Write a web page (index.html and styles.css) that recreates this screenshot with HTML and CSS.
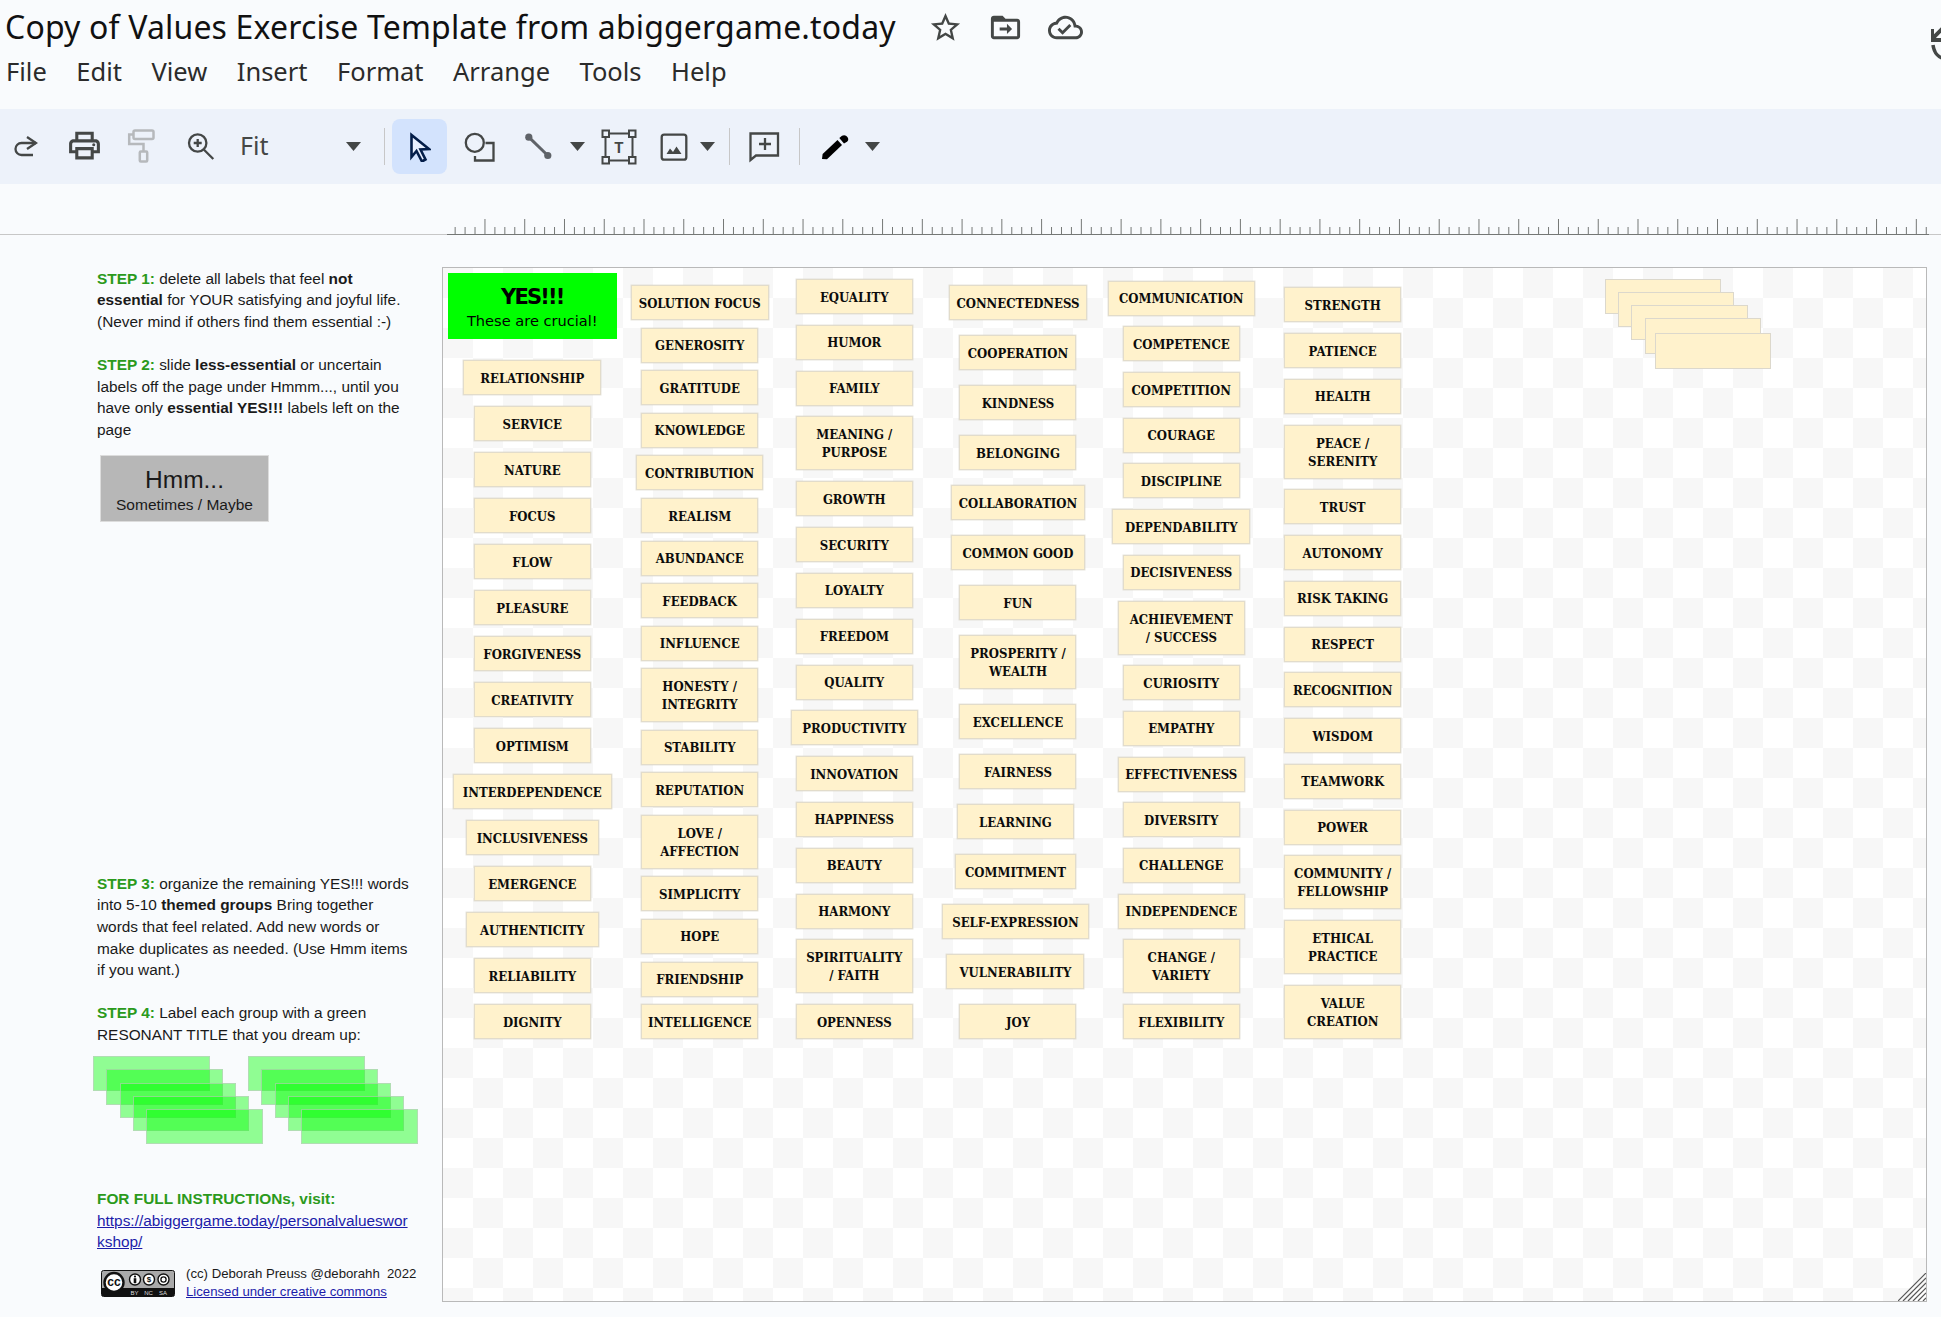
FILE: index.html
```html
<!DOCTYPE html>
<html lang="en">
<head>
  <meta charset="UTF-8">
  <title>Copy of Values Exercise Template from abiggergame.today</title>
  <link rel="stylesheet" href="styles.css">
</head>
<body>

  <header class="doc-header">
    <div class="title-row">
      <h1 class="doc-title">Copy of Values Exercise Template from abiggergame.today</h1>
      <svg class="icon-star" width="35" height="35" viewBox="0 0 24 24"><path d="M22 9.24l-7.19-.62L12 2 9.19 8.63 2 9.24l5.46 4.73L5.82 21 12 17.27 18.18 21l-1.63-7.03L22 9.24zM12 15.4l-3.76 2.27 1-4.28-3.32-2.88 4.38-.38L12 6.1l1.71 4.04 4.38.38-3.32 2.88 1 4.28L12 15.4z"/></svg>
      <svg class="icon-folder" width="35" height="35" viewBox="0 0 24 24"><path d="M20 6h-8l-2-2H4c-1.1 0-2 .9-2 2v12c0 1.1.9 2 2 2h16c1.1 0 2-.9 2-2V8c0-1.1-.9-2-2-2zm0 12H4V8h16v10z"/><path d="M13 9.5v2.5H8v2h5v2.5l3.5-3.5z"/></svg>
      <svg class="icon-cloud" width="35" height="35" viewBox="0 0 24 24"><path d="M19.35 10.04C18.67 6.59 15.64 4 12 4 9.11 4 6.6 5.64 5.35 8.04 2.34 8.36 0 10.91 0 14c0 3.31 2.69 6 6 6h13c2.76 0 5-2.24 5-5 0-2.64-2.05-4.78-4.65-4.96zM19 18H6c-2.21 0-4-1.79-4-4 0-2.05 1.53-3.76 3.56-3.97l1.07-.11.5-.95C8.08 7.14 9.94 6 12 6c2.62 0 4.88 1.86 5.39 4.43l.3 1.5 1.53.11c1.56.1 2.78 1.41 2.78 2.96 0 1.65-1.35 3-3 3z"/><path d="M10 14.17 7.91 12.09 6.5 13.5 10 17l6.01-6.01-1.41-1.41z"/></svg>
      <svg class="icon-history" width="10" height="34" viewBox="0 0 10 34"><path d="M1 2V13H12" fill="none" stroke="#444746" stroke-width="4"/><path d="M1 12 12 1" fill="none" stroke="#444746" stroke-width="4"/><path d="M2 18C3 26 8 31 14 32" fill="none" stroke="#444746" stroke-width="3.5"/></svg>
    </div>
    <nav class="menu">
      <span>File</span>
      <span>Edit</span>
      <span>View</span>
      <span>Insert</span>
      <span>Format</span>
      <span>Arrange</span>
      <span>Tools</span>
      <span>Help</span>
    </nav>
  </header>

  <div class="toolbar">
    <svg class="t-redo" width="24" height="24" viewBox="0 0 24 24"><path class="line" d="M19 21H7.5a6 6 0 0 1 0-12H22"/><path class="line" d="M13 3l9 6-9 6"/></svg>
    <svg class="t-print" width="37" height="37" viewBox="0 0 24 24"><path d="M19 8h-1V3H6v5H5c-1.66 0-3 1.34-3 3v6h4v4h12v-4h4v-6c0-1.66-1.34-3-3-3zM8 5h8v3H8V5zm8 12v2H8v-4h8v2zm2-2v-2H6v2H4v-4c0-.55.45-1 1-1h14c.55 0 1 .45 1 1v4h-2z"/><circle cx="18" cy="11.5" r="1"/></svg>
    <svg class="t-paint" width="28" height="34" viewBox="0 0 28 34"><rect class="faded" x="6.5" y="1.5" width="20" height="8.5" rx="1.5"/><path class="faded" d="M6 5.5H2.2V15H16.5V22"/><rect class="faded" x="12.8" y="22.5" width="7.4" height="10" rx="1"/></svg>
    <svg class="t-zoom" width="28" height="28" viewBox="0 0 28 28"><circle class="line" cx="10.7" cy="11" r="8.7"/><path class="line" d="M17 17.7 26.3 27M10.7 7v8M6.7 11h8"/></svg>
    <div class="zoom-select">
      <span class="zoom-value">Fit</span>
      <svg class="caret" width="15" height="9" viewBox="0 0 15 9"><path d="M0 0h15L7.5 9z"/></svg>
    </div>
    <span class="sep t-sep1"></span>
    <div class="tool-active">
      <svg class="t-cursor" width="24" height="32" viewBox="0 0 24 32"><path d="M4.5 5V27L9.5 21 15 31.5 18.5 29.5 13.5 19.5 22 19Z" fill="#e9f0fe" stroke="#041e49" stroke-width="2.6" stroke-linejoin="miter"/></svg>
    </div>
    <svg class="t-shape" width="32" height="32" viewBox="0 0 32 32"><circle class="line" cx="10.8" cy="11.8" r="9"/><path class="line" d="M21.5 12H29.5V29.5H11V25"/></svg>
    <svg class="t-line" width="28" height="28" viewBox="0 0 28 28"><path d="M4.8 5.2 23.8 23.5" fill="none" stroke="#5f6368" stroke-width="3"/><circle cx="4.8" cy="5.2" r="3.6" fill="#5f6368"/><circle cx="23.8" cy="23.5" r="3.6" fill="#5f6368"/></svg>
    <svg class="caret t-caret-line" width="15" height="9" viewBox="0 0 15 9"><path d="M0 0h15L7.5 9z"/></svg>
    <svg class="t-textbox" width="36" height="36" viewBox="0 0 36 36"><path class="thin" d="M8 4.5H27M8 31.5H27M4.5 8V27M31.5 8V27"/><rect class="thin" x="1.5" y="1.5" width="6.5" height="6.5"/><rect class="thin" x="28" y="1.5" width="6.5" height="6.5"/><rect class="thin" x="1.5" y="28" width="6.5" height="6.5"/><rect class="thin" x="28" y="28" width="6.5" height="6.5"/><text x="18" y="24" text-anchor="middle" class="t-letter">T</text></svg>
    <svg class="t-image" width="28" height="28" viewBox="0 0 28 28"><rect class="line" x="1.7" y="1.7" width="24.6" height="25" rx="2.5"/><path d="M6.5 21 10 15.5 13 19 16.5 13.5 21.5 21Z"/></svg>
    <svg class="caret t-caret-image" width="15" height="9" viewBox="0 0 15 9"><path d="M0 0h15L7.5 9z"/></svg>
    <span class="sep t-sep2"></span>
    <svg class="t-comment" width="32" height="32" viewBox="0 0 32 32"><path class="line" d="M2.5 2.5H30V24.5H8L2.5 29Z"/><path class="line" d="M17 7V19M11 13H23"/></svg>
    <span class="sep t-sep3"></span>
    <svg class="t-pen" width="28" height="28" viewBox="0 0 28 28"><path d="M1 26 1.6 21 16.5 7 21 12 6 26.3Z" fill="#000"/><path d="M18.3 5 21 2.8C23 1.4 26 2.4 27 5 27.6 6.6 27 8 26 8.8L23 10.6Z" fill="#000"/></svg>
    <svg class="caret t-caret-pen" width="15" height="9" viewBox="0 0 15 9"><path d="M0 0h15L7.5 9z"/></svg>
  </div>

  <div class="ruler-row">
    <svg class="ruler" width="1482" height="16">
      <defs>
        <pattern id="ticks" width="39.76" height="16" patternUnits="userSpaceOnUse" x="-2.3">
          <rect x="0" y="0" width="1" height="16"/>
          <rect x="10" y="8" width="1" height="8"/>
          <rect x="20" y="8" width="1" height="8"/>
          <rect x="30" y="8" width="1" height="8"/>
        </pattern>
      </defs>
      <rect width="1482" height="16" fill="url(#ticks)"/>
      <rect y="15" width="1482" height="1"/>
    </svg>
  </div>

  <main class="workspace">
    <aside class="sidebar">
      <p class="note"><b class="step">STEP 1:</b> delete all labels that feel <b>not<br>essential</b> for YOUR satisfying and joyful life.<br>(Never mind if others find them essential :-)</p>
      <p class="note note-gap"><b class="step">STEP 2:</b> slide <b>less-essential</b> or uncertain<br>labels off the page under Hmmm..., until you<br>have only <b>essential YES!!!</b> labels left on the<br>page</p>
      <div class="hmm">
        <span class="hmm-title">Hmm...</span>
        <span class="hmm-sub">Sometimes / Maybe</span>
      </div>
      <p class="note note-step3"><b class="step">STEP 3:</b> organize the remaining YES!!! words<br>into 5-10 <b>themed groups</b> Bring together<br>words that feel related. Add new words or<br>make duplicates as needed. (Use Hmm items<br>if you want.)</p>
      <p class="note note-gap"><b class="step">STEP 4:</b> Label each group with a green<br>RESONANT TITLE that you dream up:</p>
      <div class="green-stacks">
        <div class="green-stack">
          <i class="sheet s1"></i><i class="sheet s2"></i><i class="sheet s3"></i><i class="sheet s4"></i><i class="sheet s5"></i>
        </div>
        <div class="green-stack">
          <i class="sheet s1"></i><i class="sheet s2"></i><i class="sheet s3"></i><i class="sheet s4"></i><i class="sheet s5"></i>
        </div>
      </div>
      <p class="note note-full"><b class="step">FOR FULL INSTRUCTIONs, visit:</b><br><a href="#">https://abiggergame.today/personalvalueswor<br>kshop/</a></p>
      <div class="license">
        <svg class="cc-badge" width="74" height="27" viewBox="0 0 74 27">
          <rect x=".5" y=".5" width="73" height="26" rx="2" fill="#a9a9a9" stroke="#111"/>
          <rect x="1" y="18" width="72" height="8" fill="#111"/>
          <circle cx="13" cy="12.5" r="9.5" fill="#fff" stroke="#111" stroke-width="2.4"/>
          <text x="13" y="16" text-anchor="middle" class="cc-big">cc</text>
          <circle cx="34" cy="9.5" r="5.5" fill="#fff" stroke="#111" stroke-width="1.4"/>
          <circle cx="34" cy="6.6" r="1.1" fill="#111"/>
          <rect x="32.7" y="8.2" width="2.6" height="5" fill="#111"/>
          <circle cx="48" cy="9.5" r="5.5" fill="#fff" stroke="#111" stroke-width="1.4"/>
          <text x="48" y="12.4" text-anchor="middle" class="cc-small">$</text>
          <circle cx="62.5" cy="9.5" r="5.5" fill="#fff" stroke="#111" stroke-width="1.4"/>
          <circle cx="62.5" cy="9.5" r="2.6" fill="none" stroke="#111" stroke-width="1.3"/>
          <text x="33.5" y="24.6" text-anchor="middle" class="cc-tag">BY</text>
          <text x="47.5" y="24.6" text-anchor="middle" class="cc-tag">NC</text>
          <text x="62" y="24.6" text-anchor="middle" class="cc-tag">SA</text>
        </svg>
        <div class="license-text">
          <div>(cc) Deborah Preuss @deborahh&nbsp; 2022</div>
          <a href="#">Licensed under creative commons</a>
        </div>
      </div>
    </aside>

    <section class="slide">
      <div class="col col-1">
        <div class="yes-card">
          <span class="yes-title">YES!!!</span>
          <span class="yes-sub">These are crucial!</span>
        </div>
        <div class="label w138">RELATIONSHIP</div>
        <div class="label">SERVICE</div>
        <div class="label">NATURE</div>
        <div class="label">FOCUS</div>
        <div class="label">FLOW</div>
        <div class="label">PLEASURE</div>
        <div class="label">FORGIVENESS</div>
        <div class="label">CREATIVITY</div>
        <div class="label">OPTIMISM</div>
        <div class="label w159">INTERDEPENDENCE</div>
        <div class="label w133">INCLUSIVENESS</div>
        <div class="label">EMERGENCE</div>
        <div class="label w133">AUTHENTICITY</div>
        <div class="label">RELIABILITY</div>
        <div class="label">DIGNITY</div>
      </div>

      <div class="col col-2">
        <div class="label w138">SOLUTION FOCUS</div>
        <div class="label">GENEROSITY</div>
        <div class="label">GRATITUDE</div>
        <div class="label">KNOWLEDGE</div>
        <div class="label w127">CONTRIBUTION</div>
        <div class="label">REALISM</div>
        <div class="label">ABUNDANCE</div>
        <div class="label">FEEDBACK</div>
        <div class="label">INFLUENCE</div>
        <div class="label two">HONESTY /<br>INTEGRITY</div>
        <div class="label">STABILITY</div>
        <div class="label">REPUTATION</div>
        <div class="label two">LOVE /<br>AFFECTION</div>
        <div class="label">SIMPLICITY</div>
        <div class="label">HOPE</div>
        <div class="label">FRIENDSHIP</div>
        <div class="label">INTELLIGENCE</div>
      </div>

      <div class="col col-3">
        <div class="label">EQUALITY</div>
        <div class="label">HUMOR</div>
        <div class="label">FAMILY</div>
        <div class="label two">MEANING /<br>PURPOSE</div>
        <div class="label">GROWTH</div>
        <div class="label">SECURITY</div>
        <div class="label">LOYALTY</div>
        <div class="label">FREEDOM</div>
        <div class="label">QUALITY</div>
        <div class="label w127">PRODUCTIVITY</div>
        <div class="label">INNOVATION</div>
        <div class="label">HAPPINESS</div>
        <div class="label">BEAUTY</div>
        <div class="label">HARMONY</div>
        <div class="label two">SPIRITUALITY<br>/ FAITH</div>
        <div class="label">OPENNESS</div>
      </div>

      <div class="col col-4">
        <div class="label w138">CONNECTEDNESS</div>
        <div class="label">COOPERATION</div>
        <div class="label">KINDNESS</div>
        <div class="label">BELONGING</div>
        <div class="label w133">COLLABORATION</div>
        <div class="label w133">COMMON GOOD</div>
        <div class="label">FUN</div>
        <div class="label two">PROSPERITY /<br>WEALTH</div>
        <div class="label">EXCELLENCE</div>
        <div class="label">FAIRNESS</div>
        <div class="label nudged">LEARNING</div>
        <div class="label nudged w121">COMMITMENT</div>
        <div class="label nudged w147">SELF-EXPRESSION</div>
        <div class="label nudged w138">VULNERABILITY</div>
        <div class="label">JOY</div>
      </div>

      <div class="col col-5">
        <div class="label w147">COMMUNICATION</div>
        <div class="label">COMPETENCE</div>
        <div class="label">COMPETITION</div>
        <div class="label">COURAGE</div>
        <div class="label">DISCIPLINE</div>
        <div class="label w138">DEPENDABILITY</div>
        <div class="label">DECISIVENESS</div>
        <div class="label two w127">ACHIEVEMENT<br>/ SUCCESS</div>
        <div class="label">CURIOSITY</div>
        <div class="label">EMPATHY</div>
        <div class="label w127">EFFECTIVENESS</div>
        <div class="label">DIVERSITY</div>
        <div class="label">CHALLENGE</div>
        <div class="label w127">INDEPENDENCE</div>
        <div class="label two">CHANGE /<br>VARIETY</div>
        <div class="label">FLEXIBILITY</div>
      </div>

      <div class="col col-6">
        <div class="label">STRENGTH</div>
        <div class="label">PATIENCE</div>
        <div class="label">HEALTH</div>
        <div class="label two">PEACE /<br>SERENITY</div>
        <div class="label">TRUST</div>
        <div class="label">AUTONOMY</div>
        <div class="label">RISK TAKING</div>
        <div class="label">RESPECT</div>
        <div class="label">RECOGNITION</div>
        <div class="label">WISDOM</div>
        <div class="label">TEAMWORK</div>
        <div class="label">POWER</div>
        <div class="label two">COMMUNITY /<br>FELLOWSHIP</div>
        <div class="label two">ETHICAL<br>PRACTICE</div>
        <div class="label two">VALUE<br>CREATION</div>
      </div>

      <div class="blank-stack">
        <i class="blank b1"></i><i class="blank b2"></i><i class="blank b3"></i><i class="blank b4"></i><i class="blank b5"></i>
      </div>

      <svg class="resize-grip" width="28" height="28" viewBox="0 0 28 28">
        <path d="M0 28 28 0M5 28 28 5M10 28 28 10M15 28 28 15M20 28 28 20M25 28 28 25" fill="none" stroke="#555" stroke-width="1.2"/>
      </svg>
    </section>
  </main>

</body>
</html>
```

FILE: styles.css
```css
* {
  box-sizing: border-box;
}

html, body {
  margin: 0;
  height: 1317px;
  overflow: hidden;
}

body {
  background-color: #f9fbfd;
  font-family: 'Liberation Sans', Arial, sans-serif;
  color: #111;
}

/* header */

.doc-header {
  height: 109px;
}

.title-row {
  display: flex;
  align-items: center;
  height: 53px;
  padding-left: 5px;
}

.title-row svg {
  flex: none;
  fill: #444746;
  margin-top: 1px;
}

.doc-title {
  margin: 0;
  width: 923px;
  font-family: 'Noto Sans', sans-serif;
  font-size: 32px;
  font-weight: 400;
  letter-spacing: .16px;
  color: #111;
  white-space: nowrap;
}

.icon-folder {
  margin-left: 25px;
}

.icon-cloud {
  margin-left: 25px;
}

.title-row .icon-history {
  margin-left: auto;
  margin-top: 35px;
}

.menu {
  display: flex;
  gap: 29.5px;
  padding-left: 6px;
  font-family: 'Noto Sans', sans-serif;
  font-size: 25.5px;
  line-height: 36px;
  color: #2b2b2b;
}

/* toolbar */

.toolbar {
  display: flex;
  align-items: center;
  height: 75px;
  background-color: #edf2fa;
}

.toolbar svg {
  flex: none;
  fill: #444746;
}

.line {
  fill: none;
  stroke: #444746;
  stroke-width: 2.3;
}

.thin {
  fill: none;
  stroke: #444746;
  stroke-width: 2;
}

.faded {
  fill: none;
  stroke: #b6b9bc;
  stroke-width: 2.5;
}

.t-letter {
  font-family: Roboto, sans-serif;
  font-size: 15px;
  font-weight: 700;
}

.t-redo { margin-left: 14px; margin-top: -2px; }
.t-print { margin-left: 28px; margin-top: -2px; }
.t-paint { margin-left: 24px; margin-top: -2px; }
.t-zoom { margin-left: 32px; margin-top: -2px; }
.t-cursor { margin-top: -2px; margin-left: -2px; }
.t-shape { margin-left: 16.5px; }
.t-line { margin-left: 28px; margin-top: -2px; }
.t-caret-line { margin-left: 18.5px; }
.t-textbox { margin-left: 15.5px; margin-top: 1px; }
.t-image { margin-left: 23px; margin-top: 1px; }
.t-caret-image { margin-left: 12px; }
.t-sep1 { margin-left: 23px; }
.t-sep2 { margin-left: 14px; }
.t-sep3 { margin-left: 19px; }
.t-comment { margin-left: 18px; margin-top: 1px; }
.t-pen { margin-left: 21.5px; margin-top: 1px; }
.t-caret-pen { margin-left: 15.5px; }

.zoom-select {
  display: flex;
  align-items: center;
  justify-content: space-between;
  width: 121px;
  margin-left: 25px;
  font-family: 'Noto Sans', sans-serif;
  font-size: 25px;
  color: #444746;
}

.zoom-value {
  margin-top: -4px;
}

.sep {
  flex: none;
  width: 1px;
  height: 37px;
  background-color: #c7c7c7;
}

.tool-active {
  display: flex;
  align-items: center;
  justify-content: center;
  width: 55px;
  height: 55px;
  margin-left: 7px;
  border-radius: 8px;
  background-color: #d3e3fd;
}

/* ruler */

.ruler-row {
  display: flex;
  align-items: flex-end;
  height: 51px;
  padding-left: 447px;
  border-bottom: 1px solid #c7c7c7;
}

.ruler {
  display: block;
  fill: #747775;
  margin-bottom: -1px;
  shape-rendering: crispEdges;
}

/* left notes */

.workspace {
  display: flex;
  align-items: flex-start;
  padding-top: 32px;
}

.sidebar {
  flex: none;
  width: 442px;
  padding-left: 97px;
  padding-top: .8px;
  font-size: 15.4px;
  line-height: 21.6px;
  color: #1a1a1a;
}

.note {
  margin: 0;
  white-space: nowrap;
}

.note-gap {
  margin-top: 21.6px;
}

.note-step3 {
  margin-top: 350.5px;
}

.note-full {
  margin-top: 43.5px;
}

.step {
  color: #2b9a1c;
}

.note a,
.license a {
  color: #1c1caa;
}

.hmm {
  display: flex;
  flex-direction: column;
  align-items: center;
  width: 169px;
  height: 67px;
  margin: 14.7px 0 0 3px;
  padding-top: 9px;
  border: 1px solid #dcdcdc;
  background-color: #b7b7b7;
}

.hmm-title {
  font-size: 24.5px;
  line-height: 30px;
}

.hmm-sub {
  font-size: 15.5px;
  line-height: 19px;
}

.green-stacks {
  display: flex;
  gap: 38.7px;
  margin: 10.7px 0 0 -3.7px;
}

.green-stack {
  position: relative;
  width: 116.3px;
  height: 88.3px;
}

.sheet {
  position: absolute;
  width: 116.3px;
  height: 35.3px;
  border: 1px solid rgba(200, 200, 200, 0.6);
  background-color: rgba(0, 255, 0, 0.42);
}

.s1 { left: 0; top: 0; }
.s2 { left: 13px; top: 13.3px; }
.s3 { left: 26.4px; top: 26.6px; }
.s4 { left: 39.7px; top: 39.6px; }
.s5 { left: 53px; top: 53px; }

.license {
  display: flex;
  gap: 11px;
  margin: 12px 0 0 4px;
  font-size: 13.2px;
  line-height: 18px;
}

.cc-badge {
  flex: none;
  margin-top: 5px;
}

.cc-big {
  font-family: 'Liberation Sans', sans-serif;
  font-size: 12px;
  font-weight: 700;
  fill: #111;
}

.cc-small {
  font-family: 'Liberation Sans', sans-serif;
  font-size: 8px;
  font-weight: 700;
  fill: #111;
}

.cc-tag {
  font-family: 'Liberation Sans', sans-serif;
  font-size: 6px;
  fill: #ddd;
}

.license-text {
  white-space: nowrap;
}

/* slide */

.slide {
  position: relative;
  display: flex;
  align-items: flex-start;
  flex: none;
  width: 1485px;
  height: 1035px;
  padding-left: 14.3px;
  border: 1px solid #b9b9b9;
  background: conic-gradient(#fff 25%, #f7f7f7 0 50%, #fff 0 75%, #f7f7f7 0) 0 0 / 60px 60px;
}

.col {
  display: flex;
  flex-direction: column;
  align-items: center;
  flex: none;
  width: 150px;
}

.col-1 { margin-top: 5px; gap: 11px; }
.col-2 { margin-top: 17.3px; margin-left: 17.4px; gap: 7.56px; }
.col-3 { margin-top: 11px; margin-left: 4.6px; gap: 10.82px; }
.col-4 { margin-top: 17.3px; margin-left: 13.7px; gap: 15px; }
.col-5 { margin-top: 12.7px; margin-left: 13.3px; gap: 10.7px; }
.col-6 { margin-top: 19.3px; margin-left: 11.4px; gap: 10.76px; }

.yes-card {
  display: flex;
  flex-direction: column;
  align-items: center;
  flex: none;
  width: 168.7px;
  height: 66px;
  margin-bottom: 10px;
  padding-top: 12px;
  background-color: #00ff00;
  color: #000;
  font-family: 'DejaVu Sans', sans-serif;
}

.yes-title {
  font-size: 21px;
  font-weight: 700;
  letter-spacing: -1.8px;
  line-height: 24px;
}

.yes-sub {
  font-size: 14.6px;
  line-height: 24px;
}

.label {
  display: grid;
  place-content: center;
  flex: none;
  width: 117px;
  height: 35px;
  padding-top: 2px;
  border: 1px solid #e2dccb;
  box-shadow: 0 0 0 .5px rgba(210, 205, 190, .5);
  background-color: #fff2cc;
  font-family: 'DejaVu Serif Condensed', 'DejaVu Serif', serif;
  font-stretch: condensed;
  font-size: 13px;
  font-weight: 700;
  line-height: 18px;
  text-align: center;
  color: #0b0b0b;
}

.two { height: 54px; }
.w121 { width: 121px; }
.w127 { width: 127px; }
.w133 { width: 133.5px; }
.w138 { width: 138px; }
.w147 { width: 147px; }
.w159 { width: 159px; }

.nudged {
  margin-right: 5px;
}

.blank-stack {
  position: absolute;
  left: 1162px;
  top: 10.7px;
}

.blank {
  position: absolute;
  width: 116.3px;
  height: 35.3px;
  border: 1px solid #dcd8cc;
  background-color: #fff2cc;
}

.b1 { left: 0; top: 0; }
.b2 { left: 13px; top: 13.3px; }
.b3 { left: 26.4px; top: 26.4px; }
.b4 { left: 39.7px; top: 39.6px; }
.b5 { left: 49.7px; top: 54.6px; }

.resize-grip {
  position: absolute;
  right: 0;
  bottom: 0;
}
```
